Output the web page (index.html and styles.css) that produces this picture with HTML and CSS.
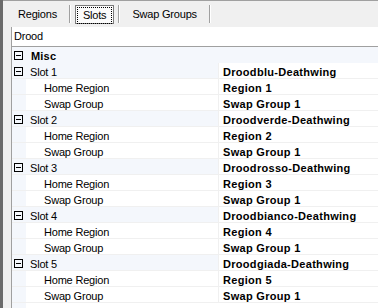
FILE: index.html
```html
<!doctype html>
<html lang="en">
<head>
    <meta charset="UTF-8" />
    <title>Slots</title>
    <link rel="stylesheet" href="styles.css">
</head>
<body>
    <div class="window">
        <div class="toolbar">
            <span class="tab">Regions</span>
            <span class="sep"></span>
            <span class="tab selected"><span class="focus">Slots</span></span>
            <span class="sep"></span>
            <span class="tab">Swap Groups</span>
            <span class="sep"></span>
        </div>
        <div class="search">Drood</div>
        <div class="grid">
            <div class="row category">
                <span class="toggle"></span>
                <span class="name">Misc</span>
            </div>

            <div class="row parent">
                <span class="toggle"></span>
                <span class="name">Slot 1</span>
                <span class="value">Droodblu-Deathwing</span>
            </div>
            <div class="row child"><span class="name">Home Region</span><span class="value">Region 1</span></div>
            <div class="row child"><span class="name">Swap Group</span><span class="value">Swap Group 1</span></div>

            <div class="row parent">
                <span class="toggle"></span>
                <span class="name">Slot 2</span>
                <span class="value">Droodverde-Deathwing</span>
            </div>
            <div class="row child"><span class="name">Home Region</span><span class="value">Region 2</span></div>
            <div class="row child"><span class="name">Swap Group</span><span class="value">Swap Group 1</span></div>

            <div class="row parent">
                <span class="toggle"></span>
                <span class="name">Slot 3</span>
                <span class="value">Droodrosso-Deathwing</span>
            </div>
            <div class="row child"><span class="name">Home Region</span><span class="value">Region 3</span></div>
            <div class="row child"><span class="name">Swap Group</span><span class="value">Swap Group 1</span></div>

            <div class="row parent">
                <span class="toggle"></span>
                <span class="name">Slot 4</span>
                <span class="value">Droodbianco-Deathwing</span>
            </div>
            <div class="row child"><span class="name">Home Region</span><span class="value">Region 4</span></div>
            <div class="row child"><span class="name">Swap Group</span><span class="value">Swap Group 1</span></div>

            <div class="row parent">
                <span class="toggle"></span>
                <span class="name">Slot 5</span>
                <span class="value">Droodgiada-Deathwing</span>
            </div>
            <div class="row child"><span class="name">Home Region</span><span class="value">Region 5</span></div>
            <div class="row child"><span class="name">Swap Group</span><span class="value">Swap Group 1</span></div>
        </div>
    </div>
</body>
</html>
```

FILE: styles.css
```css
body {
    margin: 0;
    font-family: "Liberation Sans", Arial, sans-serif;
    font-size: 11px;
    letter-spacing: -0.2px;
    color: #000;
    background: #f0f0f0;
    overflow: hidden;
}
.window {
    height: 308px;
    border-left: 3px solid #6b6b6b;
    padding-left: 8px;
    display: flex;
    flex-direction: column;
}
.toolbar {
    height: 27px;
    margin-left: -8px;
    padding-left: 8px;
    border-top: 1px solid #a0a0a0;
    box-sizing: border-box;
    display: flex;
    align-items: center;
}
.tab {
    padding: 0 7px;
    height: 19px;
    line-height: 19px;
}
.tab.selected {
    margin: 0 -1px;
    padding: 1px;
    height: 19px;
    line-height: 15px;
    border: 1px solid #7a7a7a;
    background: #fbfbfb;
    box-sizing: border-box;
}
.focus {
    display: block;
    padding: 0 5px;
    border: 1px dotted #000;
}
.sep {
    width: 1px;
    height: 18px;
    background: #a0a0a0;
    border-right: 1px solid #fff;
    margin: 0 5px;
}
.search {
    height: 19px;
    line-height: 19px;
    padding-left: 2px;
    background: #fff;
    border-left: 1px solid #a0a0a0;
    border-bottom: 1px solid #a0a0a0;
}
.grid {
    flex: 1;
    border-left: 1px solid #a0a0a0;
    background: linear-gradient(to right, #f4f7fc 14px, #fff 14px);
}
.row {
    height: 16px;
    display: grid;
    grid-template-columns: 14px 192px 1fr;
    align-items: center;
    border-bottom: 1px solid #f0f0f0;
    box-sizing: border-box;
}
.row .name,
.row .value {
    height: 13px;
    padding-top: 2px;
    line-height: 15px;
}
.row .name {
    grid-column: 2;
}
.row .value {
    grid-column: 3;
    font-weight: bold;
    letter-spacing: 0.3px;
    padding-left: 4px;
    border-left: 1px solid #f0f0f0;
    background: #fff;
}
.category {
    background: #f4f7fc;
    border-bottom-color: #f4f7fc;
}
.category .name {
    font-weight: bold;
    letter-spacing: 0.2px;
    padding-left: 5px;
}
.parent {
    background: #f4f7fc;
}
.parent .name {
    padding-left: 4px;
}
.child .name {
    padding-left: 18px;
    background: #fff;
}
.toggle {
    grid-column: 1;
    width: 9px;
    height: 9px;
    margin: 1px 0 0 2px;
    border: 1px solid #000;
    box-sizing: border-box;
    position: relative;
}
.toggle::after {
    content: "";
    position: absolute;
    left: 1px;
    right: 1px;
    top: 3px;
    height: 1px;
    background: #000;
}
```
